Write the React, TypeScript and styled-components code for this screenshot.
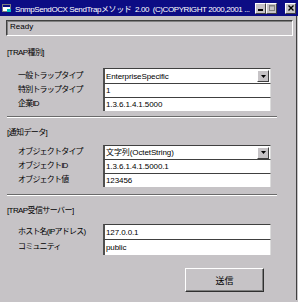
import React from 'react';
import styled, { createGlobalStyle } from 'styled-components';

const GlobalStyle = createGlobalStyle`
	html, body {
		margin: 0;
		padding: 0;
		background: #c6c3c6;
	}
	body {
		font-family: 'Liberation Sans', 'Noto Sans CJK JP', sans-serif;
	}
`;

const Window = styled.div`
	width: 300px;
	height: 303px;
	box-sizing: border-box;
	background: #c6c3c6;
	border-right: 2px solid #fff;
	border-bottom: 1px solid #fff;
	display: flex;
	flex-direction: column;
	overflow: hidden;
	position: relative;
	&::after {
		content: '';
		position: absolute;
		right: 1px;
		top: 16px;
		bottom: 2px;
		border-right: 1px solid #404040;
	}
`;

const TitleBar = styled.div`
	height: 16px;
	background: #0c0c84;
	display: flex;
	align-items: center;
	padding: 0 2px;
	color: #fff;
	font-size: 8px;
	white-space: nowrap;
	gap: 3px;
`;

const TitleText = styled.span`
	flex: 1;
	overflow: hidden;
	letter-spacing: -0.4px;
`;

const TitleButton = styled.div<{ $gap?: number }>`
	width: 9px;
	height: 9px;
	margin-left: ${(p) => p.$gap ?? 0}px;
	background: #c6c3c6;
	border: 1px solid;
	border-color: #fff #404040 #404040 #fff;
	display: flex;
	align-items: center;
	justify-content: center;
	flex-shrink: 0;
`;

const Body = styled.div`
	display: flex;
	flex-direction: column;
	padding: 0 7px 0 6px;
	font-size: 8px;
	color: #000;
`;

const StatusBox = styled.div`
	margin-top: 4px;
	height: 16px;
	box-sizing: border-box;
	border: 1px solid;
	border-color: #404040 #fff #fff #404040;
	box-shadow: inset 1px 1px 0 #808080;
	padding: 1px 0 0 3px;
	width: 287px;
`;

const SectionLabel = styled.div<{ $top: number }>`
	margin-top: ${(p) => p.$top}px;
	height: 14px;
	line-height: 14px;
	padding-left: 1px;
	letter-spacing: -0.6px;
`;

const FieldGrid = styled.div<{ $top: number }>`
	margin-top: ${(p) => p.$top}px;
	display: grid;
	grid-template-columns: 97px 168px;
`;

const Label = styled.div<{ $h: number }>`
	height: ${(p) => p.$h}px;
	line-height: ${(p) => p.$h}px;
	padding-left: 12px;
	letter-spacing: -0.8px;
	white-space: nowrap;
`;

const Field = styled.div<{ $h: number }>`
	height: ${(p) => p.$h}px;
	box-sizing: border-box;
	background: #fff;
	border-top: 1px solid #404040;
	border-left: 2px solid #505050;
	border-right: 1px solid #dcdcdc;
	padding-left: 1px;
	line-height: ${(p) => p.$h - 2}px;
	display: flex;
	align-items: center;
	justify-content: space-between;
	white-space: nowrap;
	letter-spacing: -0.1px;
`;

const DropButton = styled.div`
	width: 10px;
	height: 10px;
	margin-right: 1px;
	background: #c6c3c6;
	border: 1px solid;
	border-color: #fff #404040 #404040 #fff;
	display: flex;
	align-items: center;
	justify-content: center;
`;

const Separator = styled.div<{ $top: number }>`
	margin-top: ${(p) => p.$top}px;
	width: 270px;
	height: 1px;
	background: #6a6a6a;
	border-bottom: 1px solid #fff;
	margin-left: 1px;
`;

const ButtonRow = styled.div`
	margin-top: 13px;
	display: flex;
	justify-content: flex-end;
	padding-right: 27px;
`;

const SendButton = styled.div`
	width: 79px;
	height: 24px;
	box-sizing: border-box;
	border: 1px solid;
	border-color: #fff #303030 #303030 #fff;
	box-shadow: inset -1px -1px 0 #808080;
	display: flex;
	align-items: center;
	justify-content: center;
	font-size: 9px;
`;

function Arrow() {
	return (
		<svg width="5" height="3" viewBox="0 0 5 3">
			<path d="M0 0h5L2.5 3z" fill="#000" />
		</svg>
	);
}

function Combo({ value, h }: { value: string; h: number }) {
	return (
		<Field $h={h}>
			<span>{value}</span>
			<DropButton>
				<Arrow />
			</DropButton>
		</Field>
	);
}

export default function App(): JSX.Element {
	return (
		<>
			<GlobalStyle />
			<Window>
				<TitleBar>
					<svg width="10" height="9" viewBox="0 0 10 9">
						<rect x="0.5" y="0.5" width="8" height="7" fill="#fff" stroke="#808080" />
						<rect x="1" y="1" width="7" height="2" fill="#0c0c84" />
						<rect x="5" y="5" width="4" height="3" fill="#00c0c0" />
					</svg>
					<TitleText>SnmpSendOCX SendTrapメソッド&nbsp; 2.00&nbsp; (C)COPYRIGHT 2000,2001 ...</TitleText>
					<TitleButton>
						<svg width="5" height="5" viewBox="0 0 5 5">
							<rect x="0" y="3" width="5" height="2" fill="#000" />
						</svg>
					</TitleButton>
					<TitleButton $gap={-3}>
						<svg width="6" height="6" viewBox="0 0 6 6">
							<rect x="0.5" y="0.5" width="5" height="5" fill="none" stroke="#808080" />
							<rect x="0" y="0" width="6" height="1.5" fill="#808080" />
						</svg>
					</TitleButton>
					<TitleButton $gap={5}>
						<svg width="6" height="6" viewBox="0 0 6 6">
							<path d="M0.5 0.5L5.5 5.5M5.5 0.5L0.5 5.5" stroke="#000" strokeWidth="1.4" />
						</svg>
					</TitleButton>
				</TitleBar>
				<Body>
					<StatusBox>Ready</StatusBox>

					<SectionLabel $top={10}>[TRAP種別]</SectionLabel>
					<FieldGrid $top={8}>
						<Label $h={15}>一般トラップタイプ</Label>
						<Combo value="EnterpriseSpecific" h={15} />
						<Label $h={14}>特別トラップタイプ</Label>
						<Field $h={14}>1</Field>
						<Label $h={14}>企業ID</Label>
						<Field $h={14}>1.3.6.1.4.1.5000</Field>
					</FieldGrid>
					<Separator $top={5} />

					<SectionLabel $top={8}>[通知データ]</SectionLabel>
					<FieldGrid $top={5}>
						<Label $h={14}>オブジェクトタイプ</Label>
						<Combo value="文字列(OctetString)" h={14} />
						<Label $h={14}>オブジェクトID</Label>
						<Field $h={14}>1.3.6.1.4.1.5000.1</Field>
						<Label $h={14}>オブジェクト値</Label>
						<Field $h={14}>123456</Field>
					</FieldGrid>
					<Separator $top={7} />

					<SectionLabel $top={8}>[TRAP受信サーバー]</SectionLabel>
					<FieldGrid $top={6}>
						<Label $h={15}>ホスト名(IPアドレス)</Label>
						<Field $h={15}>127.0.0.1</Field>
						<Label $h={16}>コミュニティ</Label>
						<Field $h={16}>public</Field>
					</FieldGrid>

					<ButtonRow>
						<SendButton>送信</SendButton>
					</ButtonRow>
				</Body>
			</Window>
		</>
	);
}
